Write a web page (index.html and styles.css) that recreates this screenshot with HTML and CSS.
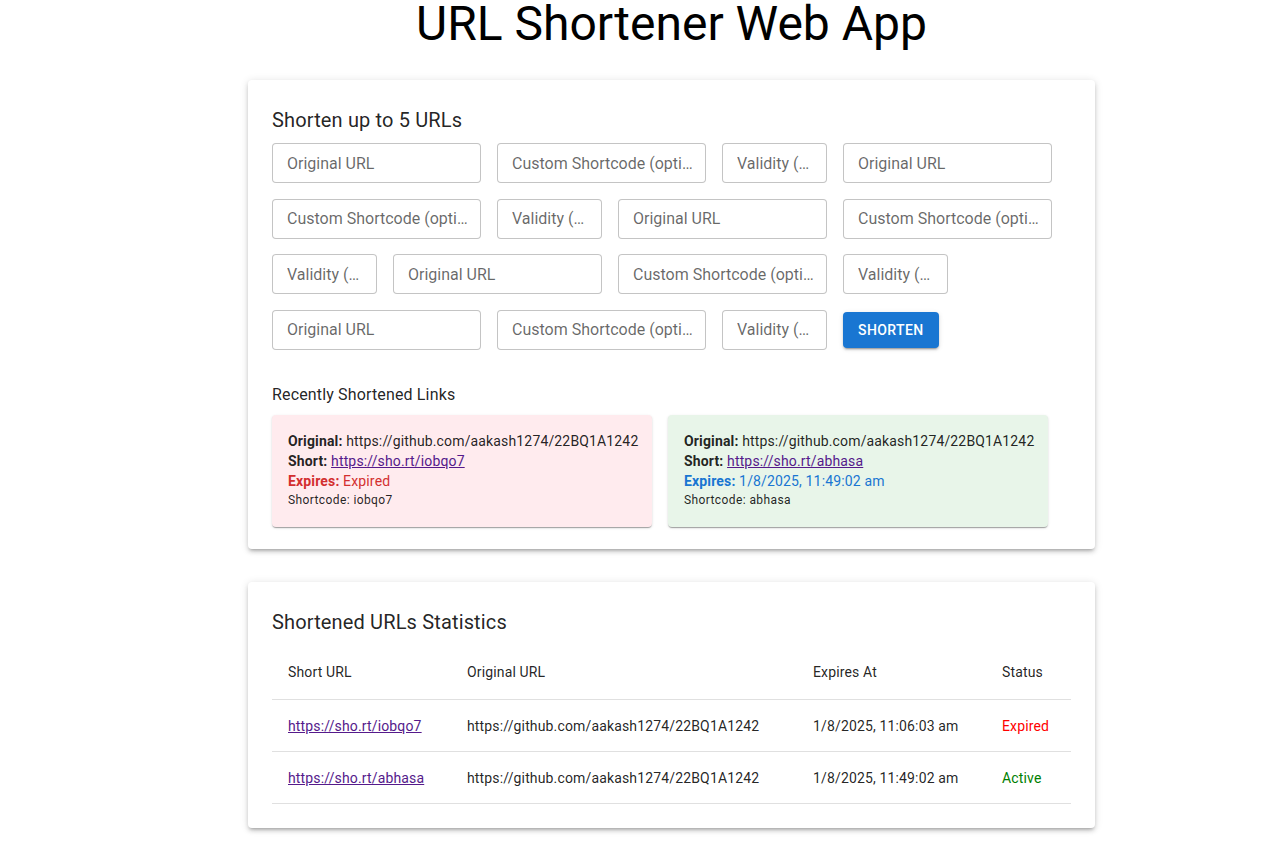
FILE: index.html
```html
<!DOCTYPE html>
<html lang="en">
<head>
<meta charset="utf-8">
<title>URL Shortener Web App</title>
<link rel="stylesheet" href="styles.css">
</head>
<body>
<main class="page">
  <h1 class="title">URL Shortener Web App</h1>

  <section class="paper form-paper">
    <h2 class="h6">Shorten up to 5 URLs</h2>
    <form class="fields">
      <input class="field wide" placeholder="Original URL">
      <input class="field wide" placeholder="Custom Shortcode (optional)">
      <input class="field narrow" placeholder="Validity (minutes)">
      <input class="field wide" placeholder="Original URL">
      <input class="field wide" placeholder="Custom Shortcode (optional)">
      <input class="field narrow" placeholder="Validity (minutes)">
      <input class="field wide" placeholder="Original URL">
      <input class="field wide" placeholder="Custom Shortcode (optional)">
      <input class="field narrow" placeholder="Validity (minutes)">
      <input class="field wide" placeholder="Original URL">
      <input class="field wide" placeholder="Custom Shortcode (optional)">
      <input class="field narrow" placeholder="Validity (minutes)">
      <input class="field wide" placeholder="Original URL">
      <input class="field wide" placeholder="Custom Shortcode (optional)">
      <input class="field narrow" placeholder="Validity (minutes)">
      <button type="button" class="btn">Shorten</button>
    </form>

    <h3 class="subtitle">Recently Shortened Links</h3>
    <div class="links">
      <div class="link-card expired">
        <p><b>Original:</b> https://github.com/aakash1274/22BQ1A1242</p>
        <p><b>Short:</b> <a href="#">https://sho.rt/iobqo7</a></p>
        <p class="exp"><b>Expires:</b> Expired</p>
        <p class="caption">Shortcode: iobqo7</p>
      </div>
      <div class="link-card active">
        <p><b>Original:</b> https://github.com/aakash1274/22BQ1A1242</p>
        <p><b>Short:</b> <a href="#">https://sho.rt/abhasa</a></p>
        <p class="exp"><b>Expires:</b> 1/8/2025, 11:49:02 am</p>
        <p class="caption">Shortcode: abhasa</p>
      </div>
    </div>
  </section>

  <section class="paper stats-paper">
    <h2 class="h6">Shortened URLs Statistics</h2>
    <table class="table">
      <colgroup>
        <col class="c1"><col class="c2"><col class="c3"><col class="c4">
      </colgroup>
      <thead>
        <tr><th>Short URL</th><th>Original URL</th><th>Expires At</th><th>Status</th></tr>
      </thead>
      <tbody>
        <tr>
          <td><a href="#">https://sho.rt/iobqo7</a></td>
          <td>https://github.com/aakash1274/22BQ1A1242</td>
          <td>1/8/2025, 11:06:03 am</td>
          <td class="st-expired">Expired</td>
        </tr>
        <tr>
          <td><a href="#">https://sho.rt/abhasa</a></td>
          <td>https://github.com/aakash1274/22BQ1A1242</td>
          <td>1/8/2025, 11:49:02 am</td>
          <td class="st-active">Active</td>
        </tr>
      </tbody>
    </table>
  </section>
</main>
</body>
</html>
```

FILE: styles.css
```css
* { box-sizing: border-box; }

html, body {
  margin: 0;
  padding: 0;
  background: #fff;
}

body {
  font-family: Roboto, "Helvetica Neue", Arial, sans-serif;
  color: rgba(0, 0, 0, 0.87);
}

.page {
  width: 847px;
  margin-left: 248px;
  padding-bottom: 14px;
}

.title {
  margin: 0 0 32px;
  font-size: 48px;
  font-weight: 400;
  line-height: 48px;
  text-align: center;
  color: #000;
  letter-spacing: 0;
}

.paper {
  background: #fff;
  border-radius: 4px;
  box-shadow: 0 3px 3px -2px rgba(0,0,0,0.2), 0 3px 4px 0 rgba(0,0,0,0.14), 0 1px 8px 0 rgba(0,0,0,0.12);
  padding: 24px;
}

.form-paper { padding-bottom: 22px; }

.stats-paper { margin-top: 33px; }

.h6 {
  margin: 0 0 7px;
  font-size: 20px;
  font-weight: 400;
  line-height: 32px;
  letter-spacing: 0.0075em;
}

.fields {
  display: flex;
  flex-wrap: wrap;
  align-items: center;
  column-gap: 16px;
  row-gap: 15.67px;
  margin: 0;
}

.field {
  height: 40px;
  border: 1px solid rgba(0, 0, 0, 0.23);
  border-radius: 4px;
  padding: 8.5px 10px 8.5px 14px;
  font-family: inherit;
  font-size: 16px;
  color: rgba(0, 0, 0, 0.87);
  background: #fff;
  text-overflow: ellipsis;
  outline: none;
}

.field::placeholder {
  color: rgba(0, 0, 0, 0.6);
  opacity: 1;
}

.wide { width: 209px; }
.narrow { width: 105px; }

.btn {
  height: 36.5px;
  padding: 6px 15px;
  border: 0;
  border-radius: 4px;
  background: #1976d2;
  color: #fff;
  font-family: inherit;
  font-size: 14px;
  font-weight: 500;
  letter-spacing: 0.02857em;
  text-transform: uppercase;
  box-shadow: 0 3px 1px -2px rgba(0,0,0,0.2), 0 2px 2px 0 rgba(0,0,0,0.14), 0 1px 5px 0 rgba(0,0,0,0.12);
  cursor: pointer;
}

.subtitle {
  margin: 31px 0 6px;
  font-size: 16px;
  font-weight: 400;
  line-height: 28px;
  letter-spacing: 0.00938em;
}

.links {
  display: flex;
  gap: 16px;
}

.link-card {
  width: 380px;
  border-radius: 4px;
  padding: 16px;
  box-shadow: 0 2px 1px -1px rgba(0,0,0,0.2), 0 1px 1px 0 rgba(0,0,0,0.14), 0 1px 3px 0 rgba(0,0,0,0.12);
}

.link-card p {
  margin: 0;
  font-size: 14px;
  line-height: 20px;
  letter-spacing: 0.01071em;
  white-space: nowrap;
}

.link-card b { font-weight: 700; }

.link-card a,
.table a {
  color: #551a8b;
  text-decoration: underline;
}

.link-card .caption {
  font-size: 12px;
  line-height: 19.92px;
  letter-spacing: 0.03333em;
}

.expired { background: #ffebee; }
.active { background: #e8f5e9; }

.expired .exp { color: #d32f2f; }
.active .exp { color: #1976d2; }

.table {
  width: 100%;
  border-collapse: collapse;
  table-layout: fixed;
}

.c1 { width: 179px; }
.c2 { width: 346px; }
.c3 { width: 189px; }
.c4 { width: 85px; }

.table th,
.table td {
  text-align: left;
  padding: 16px;
  font-size: 14px;
  letter-spacing: 0.01071em;
  border-bottom: 1px solid rgba(224, 224, 224, 1);
  white-space: nowrap;
  vertical-align: middle;
}

.table th {
  font-weight: 400;
  line-height: 24px;
  padding-top: 15px;
  padding-bottom: 15px;
}

.table td {
  line-height: 20px;
  padding-top: 16px;
  padding-bottom: 15px;
}

.st-expired { color: red; }
.st-active { color: green; }
```
